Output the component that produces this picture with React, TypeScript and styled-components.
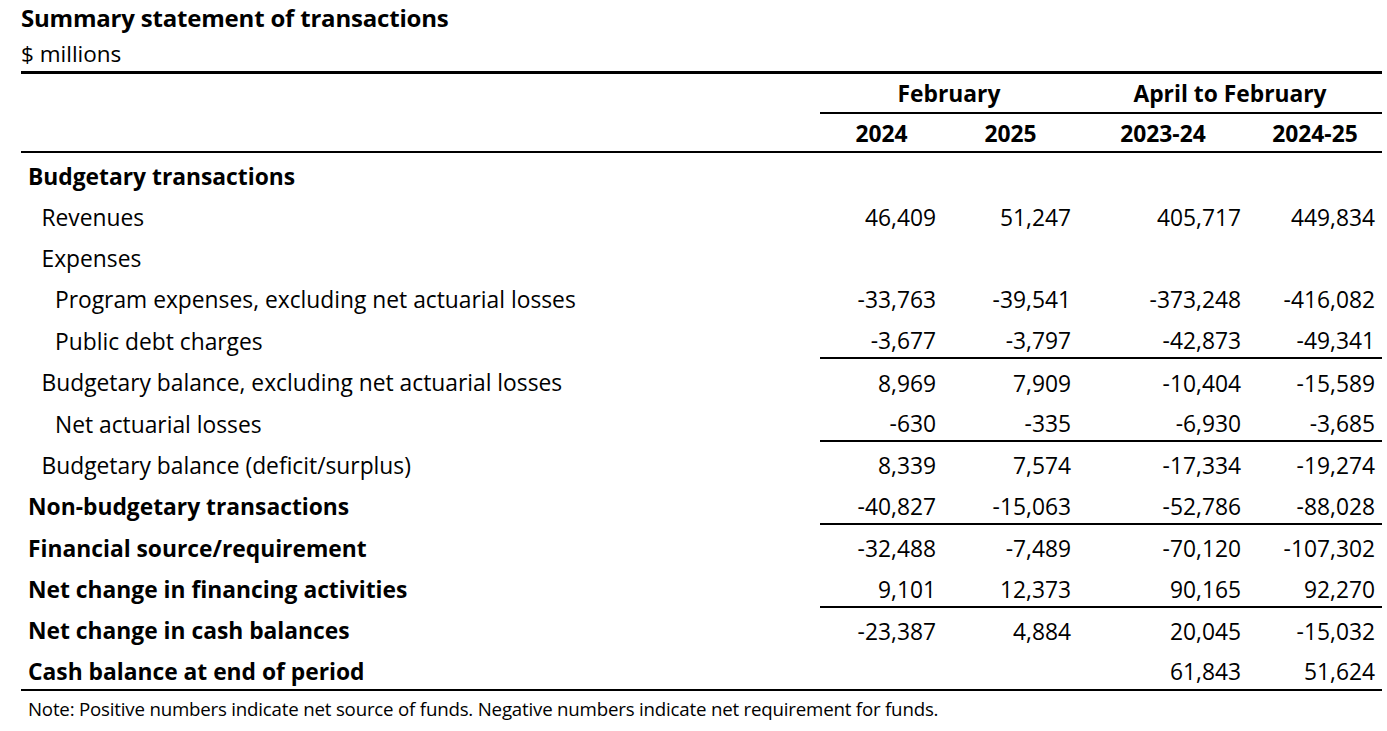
import * as React from 'react';
import styled, { createGlobalStyle } from 'styled-components';

const GlobalStyle = createGlobalStyle`
  body {
    margin: 0;
    background: #ffffff;
    color: #000000;
    font-family: "Open Sans", "Noto Sans", sans-serif;
  }
`;

const Page = styled('div')`
  padding: 3px 5px 0 21px;
  width: 1361px;
`;

const Title = styled('h1')`
  margin: 0;
  font-size: 24px;
  font-weight: 700;
  line-height: 30px;
  letter-spacing: -0.2px;
`;

const Units = styled('p')`
  margin: 0;
  padding-top: 3px;
  font-size: 22.5px;
  line-height: 35px;
`;

const Table = styled('table')`
  width: 1361px;
  border-collapse: collapse;
  table-layout: fixed;
  border-top: 3px solid #000;
  font-size: 22.8px;
`;

const HeadRow = styled('tr')<{ $height: number }>`
  height: ${({ $height }) => $height}px;
`;

const HeadCell = styled('th')<{ $underline?: boolean }>`
  font-weight: 700;
  text-align: center;
  padding: 2px 0 0;
  border-bottom: ${({ $underline }) => ($underline ? '2px solid #000' : 'none')};
`;

const BodyRow = styled('tr')<{ $last?: boolean }>`
  height: 41.4px;
  border-bottom: ${({ $last }) => ($last ? '2px solid #000' : 'none')};
`;

const LabelCell = styled('td')<{ $level: number }>`
  padding: 7px 0 0 ${({ $level }) => 7 + $level * 13.5}px;
  font-weight: ${({ $level }) => ($level === 0 ? 700 : 400)};
  white-space: nowrap;
`;

const NumCell = styled('td')<{ $underline?: boolean }>`
  text-align: right;
  padding: 7px 7px 0 0;
  border-bottom: ${({ $underline }) => ($underline ? '2px solid #000' : 'none')};
`;

const Note = styled('p')`
  margin: 0;
  padding: 5px 0 0 7px;
  font-size: 18.7px;
  letter-spacing: -0.2px;
`;

type Row = {
  label: string;
  level: number;
  values: string[];
  underline?: boolean;
};

const rows: Row[] = [
  { label: 'Budgetary transactions', level: 0, values: ['', '', '', ''] },
  { label: 'Revenues', level: 1, values: ['46,409', '51,247', '405,717', '449,834'] },
  { label: 'Expenses', level: 1, values: ['', '', '', ''] },
  { label: 'Program expenses, excluding net actuarial losses', level: 2, values: ['-33,763', '-39,541', '-373,248', '-416,082'] },
  { label: 'Public debt charges', level: 2, values: ['-3,677', '-3,797', '-42,873', '-49,341'], underline: true },
  { label: 'Budgetary balance, excluding net actuarial losses', level: 1, values: ['8,969', '7,909', '-10,404', '-15,589'] },
  { label: 'Net actuarial losses', level: 2, values: ['-630', '-335', '-6,930', '-3,685'], underline: true },
  { label: 'Budgetary balance (deficit/surplus)', level: 1, values: ['8,339', '7,574', '-17,334', '-19,274'] },
  { label: 'Non-budgetary transactions', level: 0, values: ['-40,827', '-15,063', '-52,786', '-88,028'], underline: true },
  { label: 'Financial source/requirement', level: 0, values: ['-32,488', '-7,489', '-70,120', '-107,302'] },
  { label: 'Net change in financing activities', level: 0, values: ['9,101', '12,373', '90,165', '92,270'], underline: true },
  { label: 'Net change in cash balances', level: 0, values: ['-23,387', '4,884', '20,045', '-15,032'] },
  { label: 'Cash balance at end of period', level: 0, values: ['', '', '61,843', '51,624'] },
];

const App = () => {
  return (
    <>
      <GlobalStyle />
      <Page>
        <Title>Summary statement of transactions</Title>
        <Units>$ millions</Units>
        <Table>
          <colgroup>
            <col style={{ width: 799 }} />
            <col style={{ width: 123 }} />
            <col style={{ width: 135 }} />
            <col style={{ width: 170 }} />
            <col style={{ width: 134 }} />
          </colgroup>
          <thead>
            <HeadRow $height={40}>
              <HeadCell />
              <HeadCell colSpan={2} $underline>February</HeadCell>
              <HeadCell colSpan={2} $underline>April to February</HeadCell>
            </HeadRow>
            <HeadRow $height={39}>
              <HeadCell $underline />
              <HeadCell $underline>2024</HeadCell>
              <HeadCell $underline>2025</HeadCell>
              <HeadCell $underline>2023-24</HeadCell>
              <HeadCell $underline>2024-25</HeadCell>
            </HeadRow>
          </thead>
          <tbody>
            {rows.map((row, i) => (
              <BodyRow key={row.label} $last={i === rows.length - 1}>
                <LabelCell $level={row.level}>{row.label}</LabelCell>
                {row.values.map((v, j) => (
                  <NumCell key={j} $underline={row.underline}>{v}</NumCell>
                ))}
              </BodyRow>
            ))}
          </tbody>
        </Table>
        <Note>Note: Positive numbers indicate net source of funds. Negative numbers indicate net requirement for funds.</Note>
      </Page>
    </>
  );
};

export default App;
